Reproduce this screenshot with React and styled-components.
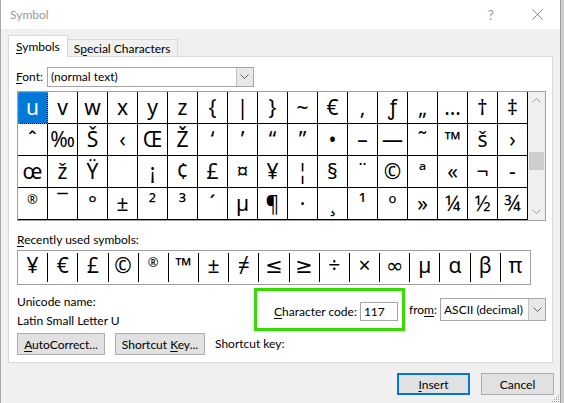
import React from 'react';
import styled, { createGlobalStyle } from 'styled-components';

const Global = createGlobalStyle`
  html, body { margin: 0; padding: 0; background: #cfcfcf; }
  body {
    font-family: "Lato", "Noto Sans", "DejaVu Sans", sans-serif;
    font-size: 12px;
    color: #000;
  }
  * { box-sizing: border-box; }
`;

const Window = styled.div`
  width: 561px;
  height: 403px;
  background: #f0f0f0;
  border-left: 1px solid #a8a8a8;
  border-right: 1px solid #9c9c9c;
  display: flex;
  flex-direction: column;
  position: relative;
  overflow: hidden;
`;

const TitleBar = styled.div`
  height: 29px;
  background: #fff;
  display: flex;
  align-items: center;
  padding-left: 9px;
  flex-shrink: 0;
`;

const Title = styled.div`
  flex: 1;
  color: #999;
  font-size: 12px;
`;

const TitleBtn = styled.div`
  width: 46px;
  height: 29px;
  display: flex;
  align-items: center;
  justify-content: center;
  color: #9a9a9a;
  font-size: 14px;
`;

const Body = styled.div`
  flex: 1;
  display: flex;
  flex-direction: column;
  padding: 7px 7px 0 7px;
`;

const Tabs = styled.div`
  display: flex;
  align-items: flex-end;
  height: 21px;
  margin-bottom: -1px;
  position: relative;
  z-index: 1;
`;

const Tab = styled.div`
  height: ${p => (p.$active ? '22px' : '18px')};
  padding: 0 ${p => (p.$active ? '7px' : '6px')};
  padding-bottom: ${p => (p.$active ? '1px' : '0')};
  background: ${p => (p.$active ? '#fff' : '#f0f0f0')};
  border: 1px solid #d9d9d9;
  border-bottom: ${p => (p.$active ? 'none' : '1px solid #d9d9d9')};
  border-left: ${p => (p.$active ? '1px solid #d9d9d9' : 'none')};
  display: flex;
  align-items: center;
  white-space: pre;
`;

const U = styled.span`
  text-decoration: underline;
  text-underline-offset: 2px;
`;

const Panel = styled.div`
  width: 545px;
  height: 307px;
  background: #fff;
  border: 1px solid #d9d9d9;
  padding: 10px 6px 0 8px;
  display: flex;
  flex-direction: column;
`;

const FontRow = styled.div`
  display: flex;
  align-items: center;
  height: 19px;
  gap: 4px;
  margin-left: -1px;
`;

const Select = styled.div`
  display: flex;
  align-items: stretch;
  width: ${p => p.$w}px;
  height: ${p => p.$h}px;
  border: 1px solid #a5a5a5;
  background: #fff;
`;

const SelectText = styled.div`
  flex: 1;
  display: flex;
  align-items: center;
  padding-left: 3px;
  white-space: pre;
  overflow: hidden;
`;

const SelectBtn = styled.div`
  width: 17px;
  border-left: 1px solid #c4c4c4;
  background: #e8e8e8;
  display: flex;
  align-items: center;
  justify-content: center;
`;

const Chevron = () => (
  <svg width="9" height="5" viewBox="0 0 9 5">
    <path d="M0.5 0.5 L4.5 4.5 L8.5 0.5" fill="none" stroke="#606060" strokeWidth="1" />
  </svg>
);

const GridFrame = styled.div`
  margin-top: 5px;
  width: 529px;
  border: 1px solid #a0a0a0;
  display: flex;
`;

const Grid = styled.div`
  display: grid;
  grid-template-columns: repeat(17, 30px);
  grid-auto-rows: 32px;
`;

const Cell = styled.div`
  border-right: 1px solid #000;
  border-bottom: 1px solid #000;
  display: flex;
  justify-content: center;
  align-items: flex-start;
  font-family: "Noto Sans", "DejaVu Sans", sans-serif;
  font-size: ${p => p.$size || 21}px;
  line-height: ${p => (p.$size ? 22 : 31)}px;
  background: ${p => (p.$selected ? '#0078d7' : '#fff')};
  color: ${p => (p.$selected ? '#fff' : '#000')};
  outline: ${p => (p.$selected ? '1px dotted #c07a20' : 'none')};
  outline-offset: -1px;
  overflow: hidden;
`;

const ScrollBar = styled.div`
  width: 17px;
  background: #f0f0f0;
  display: flex;
  flex-direction: column;
`;

const ScrollArrow = styled.div`
  height: 17px;
  display: flex;
  align-items: center;
  justify-content: center;
`;

const ScrollTrack = styled.div`
  flex: 1;
  padding: 43px 1px 0 1px;
`;

const Thumb = styled.div`
  height: 18px;
  background: #cdcdcd;
`;

const Label = styled.div`
  height: 16px;
  line-height: 16px;
  white-space: pre;
`;

const RecentLabel = styled(Label)`
  margin-top: 11px;
`;

const RecentBox = styled.div`
  margin-top: 2px;
  width: 514px;
  height: 35px;
  border: 1px solid #a0a0a0;
  display: flex;
`;

const RecentCell = styled.div`
  flex: 1;
  margin: 2px 0;
  display: flex;
  justify-content: center;
  align-items: flex-start;
  font-family: "Noto Sans", "DejaVu Sans", sans-serif;
  font-size: ${p => p.$size || 21}px;
  line-height: ${p => (p.$size ? 18 : 24)}px;
  & + & { border-left: 1px solid #000; }
`;

const InfoRow = styled.div`
  margin-top: 3px;
  height: 43px;
  display: flex;
  align-items: flex-start;
`;

const NameCol = styled.div`
  width: 240px;
  padding-top: 6px;
  display: flex;
  flex-direction: column;
  gap: 3px;
`;

const Highlight = styled.div`
  width: 151px;
  height: 43px;
  border: 3px solid #33dd00;
  display: flex;
  align-items: flex-start;
  padding: 11px 4px 0 17px;
  gap: 3px;
`;

const CodeLabel = styled.div`
  flex: 1;
  height: 19px;
  line-height: 19px;
  white-space: pre;
`;

const Input = styled.div`
  width: 42px;
  height: 19px;
  border: 1px solid #a5a5a5;
  padding-left: 3px;
  line-height: 17px;
`;

const FromGroup = styled.div`
  margin-top: 10px;
  margin-left: 4px;
  display: flex;
  align-items: center;
  gap: 3px;
`;

const ButtonRow = styled.div`
  margin-top: 2px;
  display: flex;
  align-items: center;
  gap: 10px;
`;

const Button = styled.div`
  width: ${p => p.$w}px;
  height: 22px;
  background: #e1e1e1;
  border: ${p => (p.$default ? '2px solid #0078d7' : '1px solid #adadad')};
  display: flex;
  align-items: center;
  justify-content: center;
  white-space: pre;
`;

const Footer = styled.div`
  display: flex;
  justify-content: flex-end;
  gap: 11px;
  padding: 10px 0 0 0;
  margin-right: -1px;
`;

const Grip = styled.svg`
  position: absolute;
  right: 0;
  bottom: 0;
`;

const rows = [
  ['u', 'v', 'w', 'x', 'y', 'z', '{', '|', '}', '~', '€', '‚', 'ƒ', '„', '…', '†', '‡'],
  ['ˆ', '‰', 'Š', '‹', 'Œ', 'Ž', '‘', '’', '“', '”', '•', '–', '—', '˜', '™', 'š', '›'],
  ['œ', 'ž', 'Ÿ', '\u00a0', '¡', '¢', '£', '¤', '¥', '¦', '§', '¨', '©', 'ª', '«', '¬', '-'],
  ['®', '¯', '°', '±', '²', '³', '´', 'µ', '¶', '·', '¸', '¹', 'º', '»', '¼', '½', '¾'],
];

const small = { '®': 13 };

const recent = ['¥', '€', '£', '©', '®', '™', '±', '≠', '≤', '≥', '÷', '×', '∞', 'µ', 'α', 'β', 'π'];

export default function App() {
  return (
    <>
      <Global />
      <Window>
        <TitleBar>
          <Title>Symbol</Title>
          <TitleBtn>?</TitleBtn>
          <TitleBtn>
            <svg width="11" height="11" viewBox="0 0 11 11">
              <path d="M0.5 0.5 L10.5 10.5 M10.5 0.5 L0.5 10.5" stroke="#8a8a8a" strokeWidth="1" />
            </svg>
          </TitleBtn>
        </TitleBar>
        <Body>
          <Tabs>
            <Tab $active><span><U>S</U>ymbols</span></Tab>
            <Tab><span>S<U>p</U>ecial Characters</span></Tab>
          </Tabs>
          <Panel>
            <FontRow>
              <Label><U>F</U>ont:</Label>
              <Select $w={207} $h={20}>
                <SelectText>(normal text)</SelectText>
                <SelectBtn><Chevron /></SelectBtn>
              </Select>
            </FontRow>
            <GridFrame>
              <Grid>
                {rows.flat().map((c, i) => (
                  <Cell key={i} $selected={i === 0} $size={small[c]}>{c}</Cell>
                ))}
              </Grid>
              <ScrollBar>
                <ScrollArrow>
                  <svg width="9" height="5" viewBox="0 0 9 5">
                    <path d="M0.5 4.5 L4.5 0.5 L8.5 4.5" fill="none" stroke="#a0a0a0" strokeWidth="1" />
                  </svg>
                </ScrollArrow>
                <ScrollTrack><Thumb /></ScrollTrack>
                <ScrollArrow>
                  <svg width="9" height="5" viewBox="0 0 9 5">
                    <path d="M0.5 0.5 L4.5 4.5 L8.5 0.5" fill="none" stroke="#a0a0a0" strokeWidth="1" />
                  </svg>
                </ScrollArrow>
              </ScrollBar>
            </GridFrame>
            <RecentLabel><U>R</U>ecently used symbols:</RecentLabel>
            <RecentBox>
              {recent.map((c, i) => (
                <RecentCell key={i} $size={small[c]}>{c}</RecentCell>
              ))}
            </RecentBox>
            <InfoRow>
              <NameCol>
                <Label>Unicode name:</Label>
                <Label>Latin Small Letter U</Label>
              </NameCol>
              <Highlight>
                <CodeLabel><U>C</U>haracter code:</CodeLabel>
                <Input>117</Input>
              </Highlight>
              <FromGroup>
                <Label>fro<U>m</U>:</Label>
                <Select $w={106} $h={23}>
                  <SelectText>ASCII (decimal)</SelectText>
                  <SelectBtn><Chevron /></SelectBtn>
                </Select>
              </FromGroup>
            </InfoRow>
            <ButtonRow>
              <Button $w={88}><span><U>A</U>utoCorrect...</span></Button>
              <Button $w={90}><span>Shortcut <U>K</U>ey...</span></Button>
              <Label>Shortcut key:</Label>
            </ButtonRow>
          </Panel>
          <Footer>
            <Button $w={73} $default><span><U>I</U>nsert</span></Button>
            <Button $w={73}><span>Cancel</span></Button>
          </Footer>
        </Body>
        <Grip width="10" height="10" viewBox="0 0 10 10">
          <g fill="#a0a0a0">
            <rect x="8" y="2" width="1" height="1" />
            <rect x="6" y="4" width="1" height="1" />
            <rect x="8" y="4" width="1" height="1" />
            <rect x="4" y="6" width="1" height="1" />
            <rect x="6" y="6" width="1" height="1" />
            <rect x="8" y="6" width="1" height="1" />
            <rect x="2" y="8" width="1" height="1" />
            <rect x="4" y="8" width="1" height="1" />
            <rect x="6" y="8" width="1" height="1" />
            <rect x="8" y="8" width="1" height="1" />
          </g>
        </Grip>
      </Window>
    </>
  );
}
